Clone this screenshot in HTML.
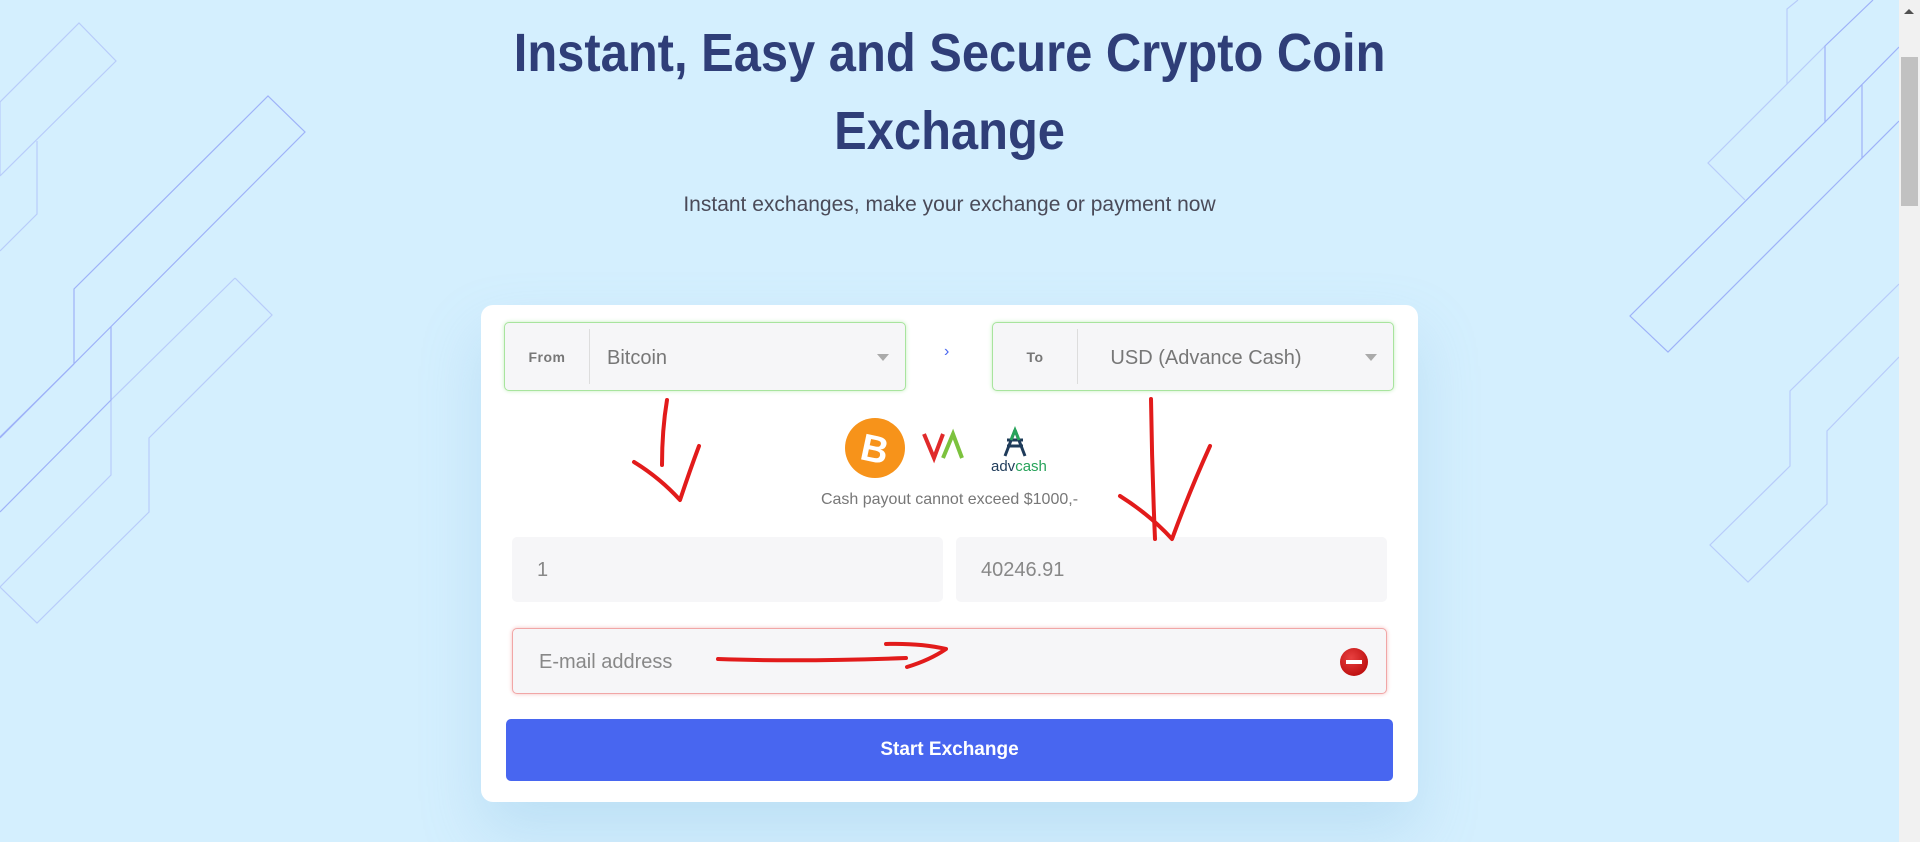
<!DOCTYPE html>
<html><head><meta charset="utf-8"><style>
*{margin:0;padding:0;box-sizing:border-box}
html,body{width:1920px;height:842px;overflow:hidden;background:#d4effe;font-family:"Liberation Sans",sans-serif}
.sb{position:absolute;right:0;top:0;width:21px;height:842px;background:#f1f1f1}
.sb .th{position:absolute;left:2px;top:57px;width:17px;height:149px;background:#c1c1c1}
.sb .up{position:absolute;left:5px;top:9px;width:0;height:0;border-left:5px solid transparent;border-right:5px solid transparent;border-bottom:5px solid #505050}
h1{position:absolute;left:0;width:1899px;text-align:center;color:#2f3e78;font-weight:bold;font-size:54px;line-height:78px;top:14px}
h1 span{display:inline-block;transform:scaleX(.905);transform-origin:center;white-space:nowrap}
.sub{position:absolute;left:0;width:1899px;text-align:center;top:193px;font-size:21px;color:#4a4a58}
.card{position:absolute;left:481px;top:305px;width:937px;height:497px;background:#fff;border-radius:12px;box-shadow:0 30px 60px rgba(120,180,220,.25)}
.sel{position:absolute;top:17px;height:69px;width:402px;background:#f6f6f8;border:1px solid #a8e49e;border-radius:5px;box-shadow:0 0 4px #c6efc0}
.sel .lab{position:absolute;left:0;top:0;width:84px;height:100%;display:flex;align-items:center;justify-content:center;font-size:14px;font-weight:bold;color:#777;letter-spacing:.5px}
.sel .div{position:absolute;left:84px;top:6px;bottom:6px;width:1px;background:#ddd}
.sel .val{position:absolute;top:24px;font-size:20px;color:#777}
.sel .car{position:absolute;right:16px;top:31px;border-left:6px solid transparent;border-right:6px solid transparent;border-top:7px solid #aaa}
.inp{position:absolute;background:#f6f6f8;border-radius:5px;font-size:20px;color:#888}
.btn{position:absolute;left:25px;top:414px;width:887px;height:62px;background:#4866f0;border-radius:5px;color:#fff;font-weight:bold;font-size:19px;display:flex;align-items:center;justify-content:center}
.note{position:absolute;left:0;width:937px;text-align:center;top:186px;font-size:16px;color:#777}
</style></head><body>
<svg style="position:absolute;left:0;top:0" width="1899" height="842" fill="none" stroke-width="1.2">
<g stroke="#b8ccfa">
<polyline points="0,102 79,23 116,61 0,176"/><line x1="0" y1="102" x2="0" y2="176"/>
<polyline points="37,141 37,214 0,251"/>
<polyline points="235,278 272,315 149,438 149,512 37,623 0,587"/>
<polyline points="235,278 111,400 111,475 0,587"/>
<polyline points="1798,0 1787,9 1787,84 1708,163 1745,200"/>
<line x1="1825" y1="46" x2="1787" y2="84"/>
<polyline points="1899,284 1790,391 1790,466 1710,545 1748,582 1827,504 1827,431 1899,357"/>
</g>
<g stroke="#9eb2f8">
<polyline points="74,364 74,289 268,96 305,132 0,438"/>
<line x1="74" y1="364" x2="0" y2="437"/>
<polyline points="111,327 111,400 0,512"/>
<polyline points="1873,0 1825,46 1825,122 1899,47"/>
<polyline points="1899,121 1862,158 1862,85"/>
<polyline points="1825,122 1630,316 1668,352 1862,158"/>
</g>
</svg>
<h1><span>Instant, Easy and Secure Crypto Coin</span><br><span>Exchange</span></h1>
<div class="sub">Instant exchanges, make your exchange or payment now</div>
<div class="card">
 <div class="sel" style="left:23px"><div class="lab">From</div><div class="div"></div><div class="val" style="left:102px">Bitcoin</div><div class="car"></div></div>
 <div style="position:absolute;left:463px;top:38px;color:#4866f0;font-size:16px">›</div>
 <div class="sel" style="left:511px"><div class="lab">To</div><div class="div"></div><div class="val" style="left:103px;width:220px;text-align:center">USD (Advance Cash)</div><div class="car"></div></div>
 <svg style="position:absolute;left:364px;top:113px" width="220" height="64">
  <circle cx="30" cy="30" r="30" fill="#f7931a"/>
  <text x="30" y="44" text-anchor="middle" fill="#fff" font-size="38" font-weight="bold" font-family="Liberation Sans" transform="rotate(12 30 30)">B</text>
  <path d="M79 16 L89 40 L98 16" stroke="#e02a2a" stroke-width="4" fill="none"/>
  <path d="M98 40 L108 16 L117 40" stroke="#7cc23e" stroke-width="4" fill="none"/>
  <path d="M170 12 L160 38 M170 12 L180 38 M162 22 H178 M162 28 H178" stroke="#1f3b5a" stroke-width="3" fill="none"/>
  <path d="M166 22 L170 12 L174 22" stroke="#27a35a" stroke-width="3" fill="none"/>
  <text x="146" y="53" font-size="15" font-family="Liberation Sans" fill="#1f3b5a">adv<tspan fill="#27a35a">cash</tspan></text>
 </svg>
 <div class="note">Cash payout cannot exceed $1000,-</div>
 <div class="inp" style="left:31px;top:232px;width:431px;height:65px;padding:22px 0 0 25px">1</div>
 <div class="inp" style="left:475px;top:232px;width:431px;height:65px;padding:22px 0 0 25px">40246.91</div>
 <div class="inp" style="left:31px;top:323px;width:875px;height:66px;border:1px solid #f1a6a6;box-shadow:0 0 4px #f5c0c0;padding:22px 0 0 26px">E-mail address
  <div style="position:absolute;right:18px;top:19px;width:28px;height:28px;border-radius:50%;background:radial-gradient(circle at 40% 35%,#e84040,#b00000)"><div style="position:absolute;left:6px;top:12px;width:16px;height:4px;background:#fff"></div></div>
 </div>
 <div class="btn">Start Exchange</div>
</div>
<svg style="position:absolute;left:0;top:0" width="1899" height="842" fill="none" stroke="#e21b1b" stroke-width="4" stroke-linecap="round" stroke-linejoin="round">
<path d="M667 400 Q662 430 662 465"/>
<path d="M634 462 Q660 478 680 500 Q690 470 699 446"/>
<path d="M1151 399 Q1152 470 1155 539"/>
<path d="M1120 496 Q1150 515 1172 539 Q1190 490 1210 446"/>
<path d="M718 659 Q800 662 906 658"/>
<path d="M886 644 Q920 643 946 649 Q930 660 907 667"/>
</svg>
<div class="sb"><div class="up"></div><div class="th"></div></div>
</body></html>
